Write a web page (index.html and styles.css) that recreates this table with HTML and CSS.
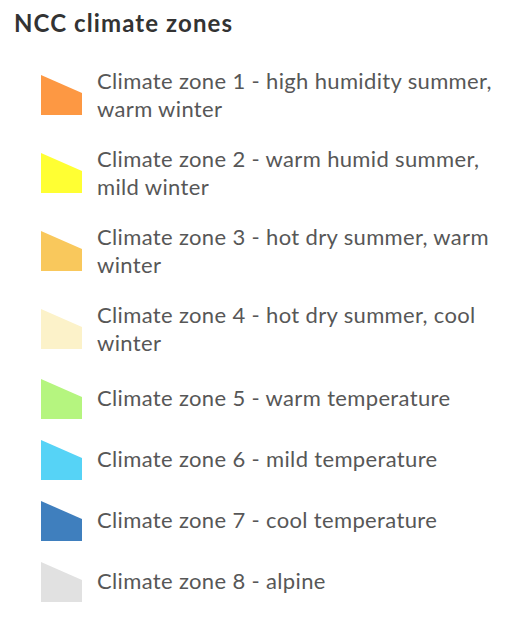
FILE: index.html
```html
<!DOCTYPE html>
<html>
<head>
<meta charset="utf-8">
<link rel="stylesheet" href="styles.css">
</head>
<body>
<div class="legend">
  <h1 class="title">NCC climate zones</h1>
  <ul class="items">
    <li class="item"><svg class="swatch" viewBox="0 0 41 40"><polygon points="0,0 41,18 41,40 0,40" fill="#fd9843"/></svg><span class="label">Climate zone 1 - high humidity summer, warm winter</span></li>
    <li class="item"><svg class="swatch" viewBox="0 0 41 40"><polygon points="0,0 41,18 41,40 0,40" fill="#ffff33"/></svg><span class="label">Climate zone 2 - warm humid summer, mild winter</span></li>
    <li class="item"><svg class="swatch" viewBox="0 0 41 40"><polygon points="0,0 41,18 41,40 0,40" fill="#f9c85c"/></svg><span class="label">Climate zone 3 - hot dry summer, warm winter</span></li>
    <li class="item"><svg class="swatch" viewBox="0 0 41 40"><polygon points="0,0 41,18 41,40 0,40" fill="#fcf2c9"/></svg><span class="label">Climate zone 4 - hot dry summer, cool winter</span></li>
    <li class="item"><svg class="swatch" viewBox="0 0 41 40"><polygon points="0,0 41,18 41,40 0,40" fill="#b5f57f"/></svg><span class="label">Climate zone 5 - warm temperature</span></li>
    <li class="item"><svg class="swatch" viewBox="0 0 41 40"><polygon points="0,0 41,18 41,40 0,40" fill="#56d3f6"/></svg><span class="label">Climate zone 6 - mild temperature</span></li>
    <li class="item"><svg class="swatch" viewBox="0 0 41 40"><polygon points="0,0 41,18 41,40 0,40" fill="#3f7fbe"/></svg><span class="label">Climate zone 7 - cool temperature</span></li>
    <li class="item"><svg class="swatch" viewBox="0 0 41 40"><polygon points="0,0 41,18 41,40 0,40" fill="#e1e1e1"/></svg><span class="label">Climate zone 8 - alpine</span></li>
  </ul>
</div>
</body>
</html>
```
FILE: styles.css
```css
html, body {
  margin: 0;
  padding: 0;
  background: #ffffff;
}
.legend {
  font-family: Lato, "Open Sans", sans-serif;
  padding: 7px 14px 0 14px;
}
.title {
  margin: 0;
  font-size: 24px;
  font-weight: 700;
  letter-spacing: 1.1px;
  line-height: 32px;
  color: #333333;
}
.items {
  list-style: none;
  margin: 17px 0 0 0;
  padding: 0;
}
.item {
  display: flex;
  align-items: center;
  gap: 15px;
  padding: 10.5px 0 10.5px 27px;
}
.swatch {
  flex: none;
  width: 41px;
  height: 40px;
  display: block;
}
.label {
  font-size: 22px;
  letter-spacing: 0.35px;
  line-height: 28.5px;
  color: #575757;
  max-width: 410px;
}
```
